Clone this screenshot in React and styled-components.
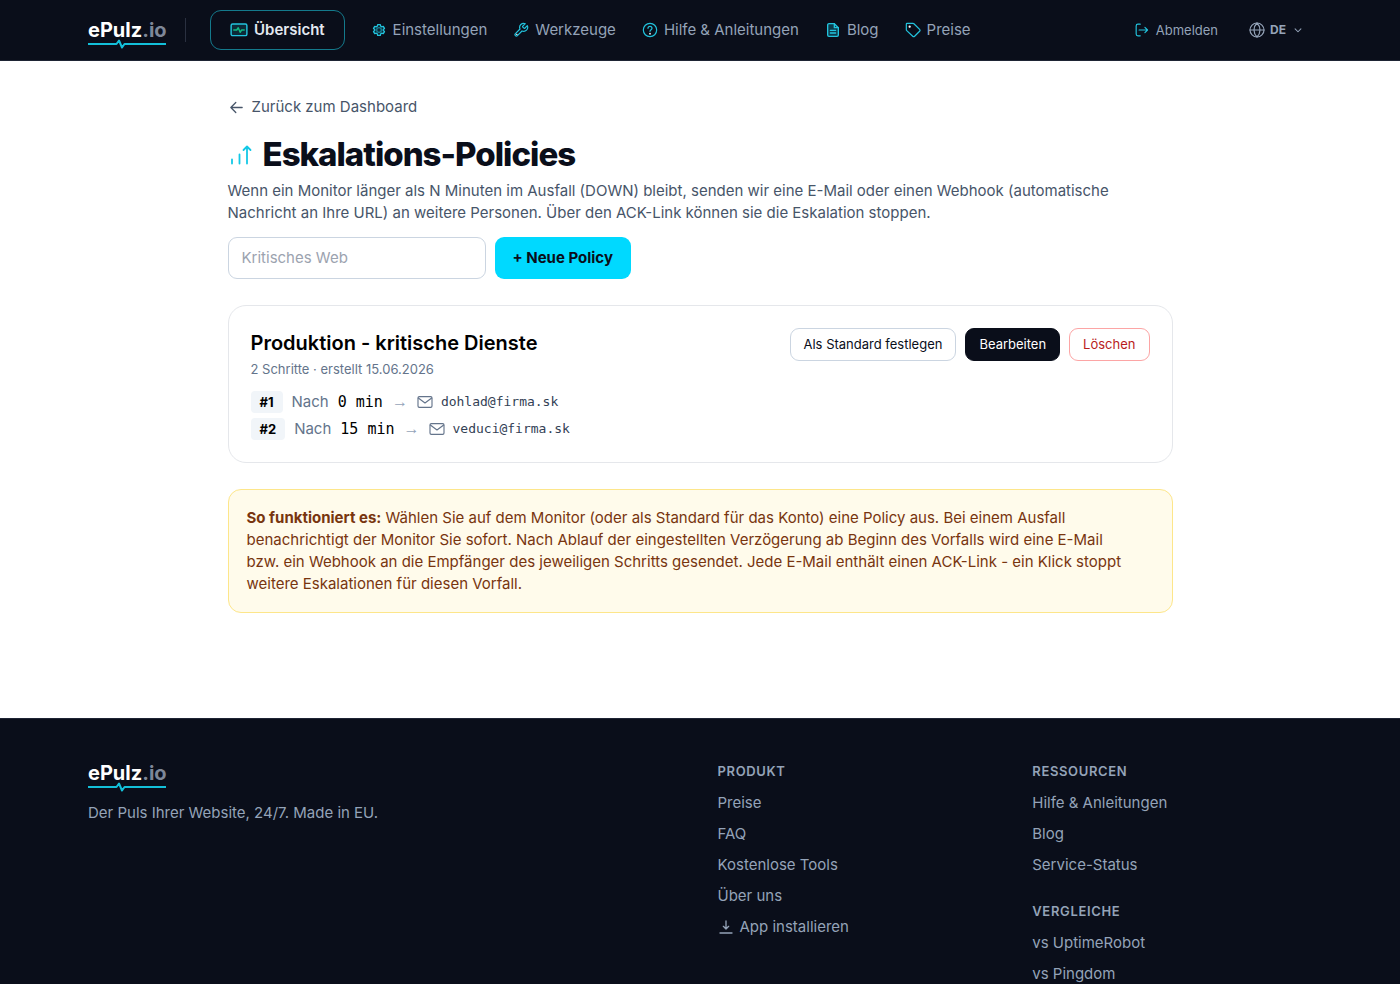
import styled, { createGlobalStyle } from "styled-components"

const GlobalStyle = createGlobalStyle`
    *, *::before, *::after {
        box-sizing: border-box;
    }
    body {
        margin: 0;
        background: #ffffff;
        color: #0a0e1a;
        font-family: Inter, "Liberation Sans", sans-serif;
        font-size: 15px;
        line-height: 22px;
    }
    h1, h2, h3, p, ul, ol {
        margin: 0;
        padding: 0;
    }
    ul, ol {
        list-style: none;
    }
    a {
        color: inherit;
        text-decoration: none;
    }
    button, input {
        font: inherit;
    }
    svg {
        display: block;
        flex-shrink: 0;
    }
`
const Header = styled.header`
    background: #0a0e1a;
    border-bottom: 1px solid #1e2434;
`
const HeaderInner = styled.div`
    max-width: 1260px;
    margin: 0 auto;
    padding: 0 18px;
    height: 60px;
    display: flex;
    align-items: center;
`
const LogoLink = styled.a`
    display: flex;
    flex-direction: column;
    width: 78px;
    color: #ffffff;
    font-size: 20px;
    font-weight: 700;
    line-height: 22px;
`
const LogoSuffix = styled.span`
    color: #7e8798;
`
const Pulse = styled.svg`
    margin: -2px 0 -8px;
`
const Divider = styled.span`
    width: 1px;
    height: 24px;
    margin: 0 24px 0 19px;
    background: #2a3040;
`
const Nav = styled.nav`
    display: flex;
    align-items: center;
    gap: 26px;
`
const NavLink = styled.a`
    display: flex;
    align-items: center;
    gap: 6px;
    color: #94a3b8;
    white-space: nowrap;
`
const ActiveLink = styled(NavLink)`
    height: 40px;
    padding: 0 19px;
    border: 1px solid #147a8c;
    border-radius: 11px;
    color: #e2e8f0;
    font-weight: 600;
`
const Account = styled.div`
    display: flex;
    align-items: center;
    gap: 31px;
    margin-left: auto;
    padding-right: 7px;
`
const SmallLink = styled.a`
    display: flex;
    align-items: center;
    gap: 7px;
    color: #94a3b8;
    font-size: 13px;
    line-height: 18px;
`
const LanguageButton = styled.button`
    display: flex;
    align-items: center;
    gap: 5px;
    padding: 0;
    border: 0;
    background: none;
    color: #94a3b8;
    font-size: 12px;
    font-weight: 700;
    line-height: 18px;
`
const Main = styled.main`
    max-width: 981px;
    margin: 0 auto;
    padding: 35px 18px 105px;
`
const BackLink = styled.a`
    display: inline-flex;
    align-items: center;
    gap: 7px;
    color: #475569;
`
const Title = styled.h1`
    display: flex;
    align-items: center;
    gap: 11px;
    margin-top: 12px;
    font-size: 33px;
    font-weight: 800;
    line-height: 40px;
    letter-spacing: -1px;
`
const Intro = styled.p`
    margin-top: 6px;
    color: #475569;
`
const CreateForm = styled.form`
    display: flex;
    gap: 9px;
    margin-top: 13px;
`
const NameInput = styled.input`
    width: 258px;
    height: 42px;
    padding: 0 13px;
    border: 1px solid #cbd5e1;
    border-radius: 9px;
    background: #ffffff;
    color: #0a0e1a;
    &::placeholder {
        color: #9ca3af;
        opacity: 1;
    }
`
const CreateButton = styled.button`
    height: 42px;
    padding: 0 18px;
    border: 0;
    border-radius: 9px;
    background: #00d9ff;
    color: #0a0e1a;
    font-weight: 700;
`
const PolicyCard = styled.section`
    margin-top: 26px;
    padding: 22px;
    border: 1px solid #e5e7eb;
    border-radius: 18px;
`
const PolicyHead = styled.div`
    display: flex;
    justify-content: space-between;
    align-items: flex-start;
`
const PolicyName = styled.h2`
    font-size: 20px;
    font-weight: 600;
    line-height: 31px;
    color: #000000;
`
const PolicyMeta = styled.p`
    margin-top: 1px;
    color: #64748b;
    font-size: 13px;
    line-height: 18px;
`
const Actions = styled.div`
    display: flex;
    gap: 9px;
`
const ActionButton = styled.button`
    height: 33px;
    padding: 0 13px;
    border: 1px solid ${(props) => props.$line};
    border-radius: 9px;
    background: ${(props) => props.$fill || "#ffffff"};
    color: ${(props) => props.$ink};
    font-size: 13px;
    line-height: 18px;
`
const Steps = styled.ol`
    display: grid;
    gap: 5px;
    margin-top: 13px;
`
const Step = styled.li`
    display: flex;
    align-items: center;
    gap: 9px;
    color: #64748b;
`
const StepNumber = styled.span`
    padding: 2px 9px;
    border-radius: 4px;
    background: #f1f5f9;
    color: #000000;
    font-size: 13px;
    font-weight: 700;
    line-height: 18px;
`
const Delay = styled.span`
    color: #000000;
    font-family: monospace;
    font-size: 15px;
`
const Arrow = styled.span`
    color: #94a3b8;
    font-family: "Liberation Sans", sans-serif;
    font-size: 16px;
`
const Recipient = styled.span`
    display: flex;
    align-items: center;
    gap: 8px;
    color: #334155;
    font-family: monospace;
    font-size: 13px;
    line-height: 18px;
`
const Note = styled.aside`
    margin-top: 26px;
    padding: 17px 18px;
    border: 1px solid #fde68a;
    border-radius: 13px;
    background: #fffbeb;
    color: #78350f;
`
const NoteText = styled.p`
    max-width: 888px;
`
const FooterBar = styled.footer`
    background: #0a0e1a;
    border-top: 1px solid #1e2434;
    color: #94a3b8;
`
const FooterInner = styled.div`
    max-width: 1260px;
    margin: 0 auto;
    padding: 43px 18px;
    display: grid;
    grid-template-columns: repeat(4, 1fr);
    gap: 35px;
`
const Brand = styled.div`
    grid-column: span 2;
`
const Tagline = styled.p`
    margin-top: 18px;
`
const FooterTitle = styled.h3`
    margin-bottom: 12px;
    font-size: 13px;
    font-weight: 600;
    line-height: 18px;
    letter-spacing: 0.05em;
    text-transform: uppercase;
`
const FooterList = styled.ul`
    display: grid;
    gap: 9px;
    margin-bottom: 26px;
`
const FooterLink = styled.a`
    display: flex;
    align-items: center;
    gap: 6px;
`

function Icon({ size = 16, color = "currentColor", width = 1.5, children }) {
  return (
    <svg width={size} height={size} viewBox="0 0 24 24" fill="none" stroke={color} strokeWidth={width} strokeLinecap="round" strokeLinejoin="round" aria-hidden="true">
      {children}
    </svg>
  )
}

const cyan = "#22c3dd"

function Logo() {
  return (
    <LogoLink href="#">
      <span>ePulz<LogoSuffix>.io</LogoSuffix></span>
      <Pulse width="78" height="10" viewBox="0 0 78 10" fill="none" stroke="#13bfd9" strokeWidth="2" strokeLinejoin="round" aria-hidden="true">
        <path d="M0 5h28.500l2.500-3.500 3 7 2.500-3.500H78" />
      </Pulse>
    </LogoLink>
  )
}

function TopBar() {
  return (
    <Header>
      <HeaderInner>
        <Logo />
        <Divider />
        <Nav>
          <ActiveLink href="#">
            <Icon size={18} color={cyan} width={1.9}>
              <rect x="1.500" y="4" width="21" height="15.500" rx="2" fill="#0c2a38" />
              <path d="M5 12h4l2-3 2.500 6 2-3H19" stroke="#10b981" />
            </Icon>
            Übersicht
          </ActiveLink>
          <NavLink href="#">
            <Icon color={cyan} width={2}>
              <circle cx="12" cy="12" r="3.500" />
              <path d="M10 4h4l.6 2.300 1.400.9 2.400-.7 1.800 3.100-1.800 1.700v1.400l1.800 1.700-1.800 3.100-2.400-.7-1.400.9L14 20h-4l-.6-2.300-1.400-.9-2.400.7-1.800-3.100 1.800-1.700v-1.400L3.800 9.600l1.800-3.100 2.400.7 1.400-.9z" fill="#0c3a4a" fillOpacity="0.500" />
            </Icon>
            Einstellungen
          </NavLink>
          <NavLink href="#">
            <Icon color={cyan} width={1.8}>
              <path d="M14.700 6.300a1 1 0 0 0 0 1.400l1.600 1.600a1 1 0 0 0 1.400 0l3.770-3.770a6 6 0 0 1-7.940 7.940l-6.910 6.910a2.120 2.120 0 0 1-3-3l6.910-6.910a6 6 0 0 1 7.940-7.940z" />
              <circle cx="5.500" cy="18.500" r=".5" fill="#ffffff" stroke="#ffffff" strokeWidth="1" />
            </Icon>
            Werkzeuge
          </NavLink>
          <NavLink href="#">
            <Icon color={cyan} width={1.8}>
              <circle cx="12" cy="12" r="10" />
              <path d="M9 9.500a3 3 0 0 1 6 0c0 2-3 2.200-3 4.500" />
              <circle cx="12" cy="17.500" r=".5" fill="#ffffff" stroke="#ffffff" />
            </Icon>
            Hilfe &amp; Anleitungen
          </NavLink>
          <NavLink href="#">
            <Icon color={cyan} width={2}>
              <path d="M14 2.500H6a2 2 0 0 0-2 2v15a2 2 0 0 0 2 2h12a2 2 0 0 0 2-2v-11z" fill="#0c3a4a" />
              <path d="M14 2.500v6h6M8 12.500h8M8 16.500h8" />
            </Icon>
            Blog
          </NavLink>
          <NavLink href="#">
            <Icon color={cyan} width={1.8}>
              <path d="M2 3v8.500a2 2 0 0 0 .6 1.400l9 8.500a2 2 0 0 0 2.800 0l7.500-7.500a2 2 0 0 0 0-2.800l-8.500-8.500a2 2 0 0 0-1.400-.6H3a1 1 0 0 0-1 1z" />
              <circle cx="7" cy="7" r=".8" fill="#ffffff" stroke="#ffffff" />
            </Icon>
            Preise
          </NavLink>
        </Nav>
        <Account>
          <SmallLink href="#">
            <Icon size={14} color={cyan} width={2}>
              <path d="M9 2H5a3 3 0 0 0-3 3v14a3 3 0 0 0 3 3h4M7 12h14M17 7.500l4.500 4.500-4.500 4.500" />
            </Icon>
            Abmelden
          </SmallLink>
          <LanguageButton type="button">
            <Icon width={1.8}>
              <circle cx="12" cy="12" r="10.500" />
              <path d="M1.500 12h21M12 1.500c6 6 6 15 0 21M12 1.500c-6 6-6 15 0 21" />
            </Icon>
            DE
            <Icon size={14} width={1.8}>
              <path d="M7 10l5 5 5-5" />
            </Icon>
          </LanguageButton>
        </Account>
      </HeaderInner>
    </Header>
  )
}

const steps = [
  { number: 1, delay: "0 min", email: "dohlad@firma.sk" },
  { number: 2, delay: "15 min", email: "veduci@firma.sk" },
]

function Policy() {
  return (
    <PolicyCard>
      <PolicyHead>
        <div>
          <PolicyName>Produktion - kritische Dienste</PolicyName>
          <PolicyMeta>2 Schritte · erstellt 15.06.2026</PolicyMeta>
        </div>
        <Actions>
          <ActionButton $line="#cbd5e1" $ink="#0a0e1a">Als Standard festlegen</ActionButton>
          <ActionButton $line="#0a0e1a" $fill="#0a0e1a" $ink="#ffffff">Bearbeiten</ActionButton>
          <ActionButton $line="#fca5a5" $ink="#b91c1c">Löschen</ActionButton>
        </Actions>
      </PolicyHead>
      <Steps>
        {steps.map((step) => (
          <Step key={step.number}>
            <StepNumber>#{step.number}</StepNumber>
            <span>Nach</span>
            <Delay>{step.delay}</Delay>
            <Arrow>→</Arrow>
            <Recipient>
              <Icon color="#64748b" width={1.7}>
                <rect x="1.500" y="4" width="21" height="16" rx="2" />
                <path d="M2 6l10 7.500L22 6" />
              </Icon>
              {step.email}
            </Recipient>
          </Step>
        ))}
      </Steps>
    </PolicyCard>
  )
}

function FooterGroup({ title, links }) {
  return (
    <div>
      <FooterTitle>{title}</FooterTitle>
      <FooterList>
        {links.map((link) => (
          <li key={link}>
            <FooterLink href="#">
              {link === "App installieren" && (
                <Icon width={2}>
                  <path d="M12 3v12M8 11l4 4 4-4M3 21h18" />
                </Icon>
              )}
              {link}
            </FooterLink>
          </li>
        ))}
      </FooterList>
    </div>
  )
}

function Footer() {
  return (
    <FooterBar>
      <FooterInner>
        <Brand>
          <Logo />
          <Tagline>Der Puls Ihrer Website, 24/7. Made in EU.</Tagline>
        </Brand>
        <FooterGroup title="Produkt" links={["Preise", "FAQ", "Kostenlose Tools", "Über uns", "App installieren"]} />
        <div>
          <FooterGroup title="Ressourcen" links={["Hilfe & Anleitungen", "Blog", "Service-Status"]} />
          <FooterGroup title="Vergleiche" links={["vs UptimeRobot", "vs Pingdom"]} />
        </div>
      </FooterInner>
    </FooterBar>
  )
}

function App() {
  return (
    <>
      <GlobalStyle />
      <TopBar />
      <Main>
        <BackLink href="#">
          <Icon size={17} width={1.8}>
            <path d="M20 12H4M11 5l-7 7 7 7" />
          </Icon>
          Zurück zum Dashboard
        </BackLink>
        <Title>
          <Icon size={24} color="#13c8e6" width={1.8}>
            <path d="M4 21.500v-4M11.500 21.500v-9M19 21.500V5M15.500 8L19 4.500 22.500 8" />
          </Icon>
          Eskalations-Policies
        </Title>
        <Intro>
          Wenn ein Monitor länger als N Minuten im Ausfall (DOWN) bleibt, senden wir eine E-Mail oder
          einen Webhook (automatische Nachricht an Ihre URL) an weitere Personen. Über den ACK-Link
          können sie die Eskalation stoppen.
        </Intro>
        <CreateForm>
          <NameInput type="text" placeholder="Kritisches Web" aria-label="Name der Policy" />
          <CreateButton type="button">+ Neue Policy</CreateButton>
        </CreateForm>
        <Policy />
        <Note>
          <NoteText>
            <strong>So funktioniert es:</strong> Wählen Sie auf dem Monitor (oder als Standard für das
            Konto) eine Policy aus. Bei einem Ausfall benachrichtigt der Monitor Sie sofort. Nach Ablauf
            der eingestellten Verzögerung ab Beginn des Vorfalls wird eine E-Mail bzw. ein Webhook an
            die Empfänger des jeweiligen Schritts gesendet. Jede E-Mail enthält einen ACK-Link - ein
            Klick stoppt weitere Eskalationen für diesen Vorfall.
          </NoteText>
        </Note>
      </Main>
      <Footer />
    </>
  )
}

export default App
